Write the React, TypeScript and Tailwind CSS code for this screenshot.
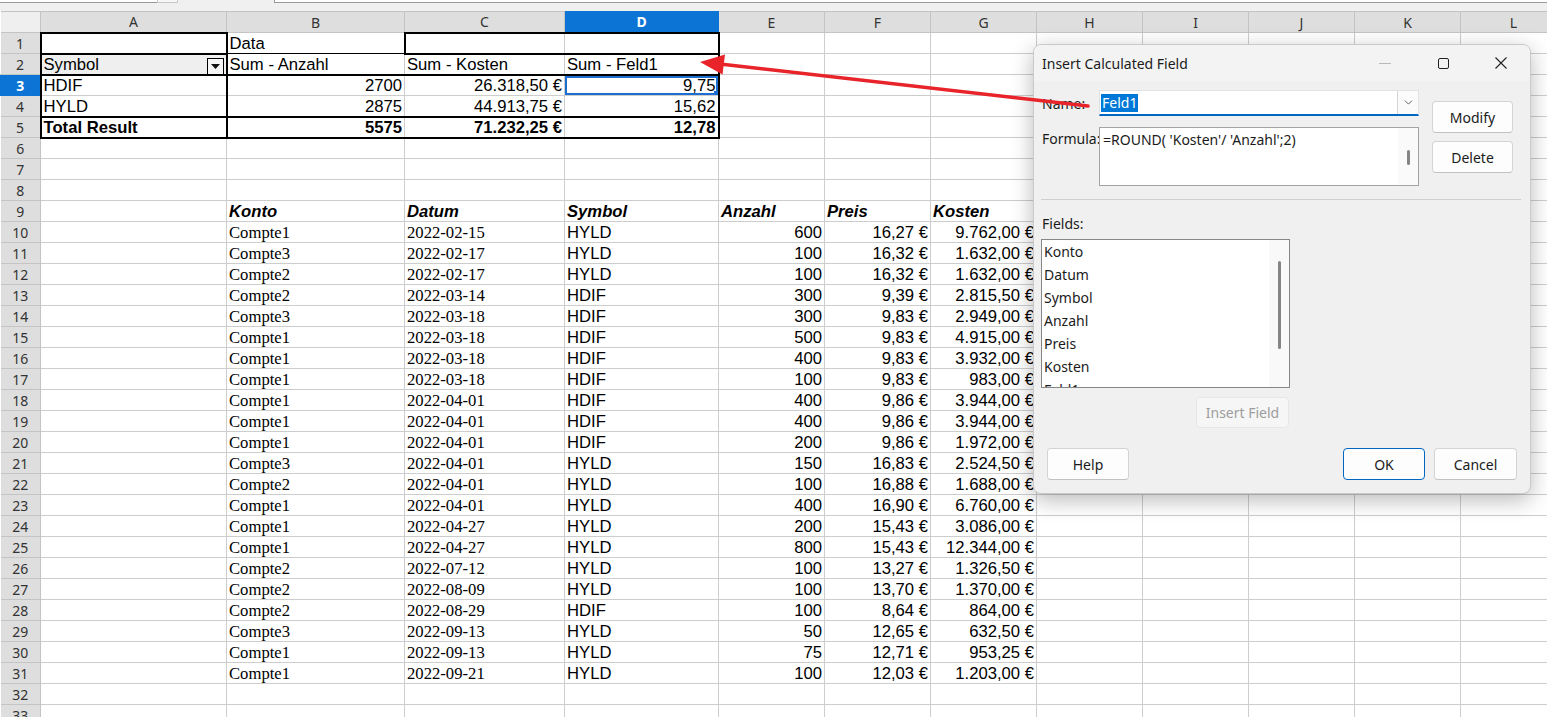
import { ChevronDown } from "lucide-react";

type Cell = { t?: string; c?: string; sel?: boolean; filter?: boolean };

const SERIF = "font-['Liberation_Serif',serif]";
const R = "text-right";
const BI = "font-bold italic";

const COLS: { k: string; w: string }[] = [
  { k: "A", w: "w-[186px]" },
  { k: "B", w: "w-[178px]" },
  { k: "C", w: "w-[160px]" },
  { k: "D", w: "w-[154px]" },
  { k: "E", w: "w-[106px]" },
  { k: "F", w: "w-[106px]" },
  { k: "G", w: "w-[106px]" },
  { k: "H", w: "w-[106px]" },
  { k: "I", w: "w-[106px]" },
  { k: "J", w: "w-[106px]" },
  { k: "K", w: "w-[106px]" },
  { k: "L", w: "w-[106px]" },
];

const DATA: string[][] = [
  ["Compte1", "2022-02-15", "HYLD", "600", "16,27 €", "9.762,00 €"],
  ["Compte3", "2022-02-17", "HYLD", "100", "16,32 €", "1.632,00 €"],
  ["Compte2", "2022-02-17", "HYLD", "100", "16,32 €", "1.632,00 €"],
  ["Compte2", "2022-03-14", "HDIF", "300", "9,39 €", "2.815,50 €"],
  ["Compte3", "2022-03-18", "HDIF", "300", "9,83 €", "2.949,00 €"],
  ["Compte1", "2022-03-18", "HDIF", "500", "9,83 €", "4.915,00 €"],
  ["Compte1", "2022-03-18", "HDIF", "400", "9,83 €", "3.932,00 €"],
  ["Compte1", "2022-03-18", "HDIF", "100", "9,83 €", "983,00 €"],
  ["Compte1", "2022-04-01", "HDIF", "400", "9,86 €", "3.944,00 €"],
  ["Compte1", "2022-04-01", "HDIF", "400", "9,86 €", "3.944,00 €"],
  ["Compte1", "2022-04-01", "HDIF", "200", "9,86 €", "1.972,00 €"],
  ["Compte3", "2022-04-01", "HYLD", "150", "16,83 €", "2.524,50 €"],
  ["Compte2", "2022-04-01", "HYLD", "100", "16,88 €", "1.688,00 €"],
  ["Compte1", "2022-04-01", "HYLD", "400", "16,90 €", "6.760,00 €"],
  ["Compte1", "2022-04-27", "HYLD", "200", "15,43 €", "3.086,00 €"],
  ["Compte1", "2022-04-27", "HYLD", "800", "15,43 €", "12.344,00 €"],
  ["Compte2", "2022-07-12", "HYLD", "100", "13,27 €", "1.326,50 €"],
  ["Compte2", "2022-08-09", "HYLD", "100", "13,70 €", "1.370,00 €"],
  ["Compte2", "2022-08-29", "HDIF", "100", "8,64 €", "864,00 €"],
  ["Compte3", "2022-09-13", "HYLD", "50", "12,65 €", "632,50 €"],
  ["Compte1", "2022-09-13", "HYLD", "75", "12,71 €", "953,25 €"],
  ["Compte1", "2022-09-21", "HYLD", "100", "12,03 €", "1.203,00 €"],
];

const empty = (n: number): Cell[] => Array.from({ length: n }, () => ({}));

function buildRows(): Cell[][] {
  const rows: Cell[][] = [];
  rows.push([
    { c: "border-2 border-black" },
    { t: "Data", c: "border-b-black" },
    { c: "border-t-2 border-l-2 border-b-2 border-t-black border-l-black border-b-black" },
    { c: "border-t-2 border-r-2 border-b-2 border-t-black border-r-black border-b-black" },
    ...empty(8),
  ]);
  rows.push([
    { t: "Symbol", filter: true, c: "bg-[#efefef] border-l-2 border-r-2 border-b-2 border-l-black border-r-black border-b-black" },
    { t: "Sum - Anzahl", c: "border-b-2 border-b-black" },
    { t: "Sum - Kosten", c: "border-b-2 border-b-black" },
    { t: "Sum - Feld1", c: "border-b-2 border-r-2 border-b-black border-r-black" },
    ...empty(8),
  ]);
  rows.push([
    { t: "HDIF", c: "border-l-2 border-r-2 border-l-black border-r-black" },
    { t: "2700", c: R },
    { t: "26.318,50 €", c: R },
    { t: "9,75", c: R + " border-r-2 border-r-black", sel: true },
    ...empty(8),
  ]);
  rows.push([
    { t: "HYLD", c: "border-l-2 border-r-2 border-l-black border-r-black" },
    { t: "2875", c: R },
    { t: "44.913,75 €", c: R },
    { t: "15,62", c: R + " border-r-2 border-r-black" },
    ...empty(8),
  ]);
  rows.push([
    { t: "Total Result", c: "font-bold border-2 border-black" },
    { t: "5575", c: "text-right font-bold border-t-2 border-b-2 border-t-black border-b-black" },
    { t: "71.232,25 €", c: "text-right font-bold border-t-2 border-b-2 border-t-black border-b-black" },
    { t: "12,78", c: "text-right font-bold border-t-2 border-b-2 border-r-2 border-t-black border-b-black border-r-black" },
    ...empty(8),
  ]);
  rows.push(empty(12));
  rows.push(empty(12));
  rows.push(empty(12));
  rows.push([
    {},
    { t: "Konto", c: BI },
    { t: "Datum", c: BI },
    { t: "Symbol", c: BI },
    { t: "Anzahl", c: BI },
    { t: "Preis", c: BI },
    { t: "Kosten", c: BI },
    ...empty(5),
  ]);
  DATA.forEach((d) => {
    rows.push([
      {},
      { t: d[0], c: SERIF },
      { t: d[1], c: SERIF },
      { t: d[2] },
      { t: d[3], c: R },
      { t: d[4], c: R },
      { t: d[5], c: R },
      ...empty(5),
    ]);
  });
  rows.push(empty(12));
  rows.push(empty(12));
  return rows;
}

function Sheet() {
  const rows = buildRows();
  return (
    <table className="table-fixed border-collapse w-[1566px] font-['Liberation_Sans',Arial,sans-serif] text-[16.67px] text-black">
      <colgroup>
        <col className="w-[40px]" />
        {COLS.map((c) => (
          <col key={c.k} className={c.w} />
        ))}
      </colgroup>
      <thead>
        <tr className="h-[21px]">
          <th className="p-0 h-[21px] bg-[#efefef] border border-[#c4c4c4] border-l-0"></th>
          {COLS.map((c) => (
            <th
              key={c.k}
              className={
                c.k === "D"
                  ? "p-0 h-[21px] leading-[19px] bg-[#0b74d4] text-white font-bold border border-[#0b74d4] font-['Noto_Sans',sans-serif] text-[14px]"
                  : "p-0 h-[21px] leading-[19px] bg-[#dedede] text-[#333] font-normal border border-[#c4c4c4] font-['Noto_Sans',sans-serif] text-[14px]"
              }
            >
              {c.k}
            </th>
          ))}
        </tr>
      </thead>
      <tbody>
        {rows.map((r, i) => (
          <tr key={i} className="h-[21px]">
            <td
              className={
                i === 2
                  ? "p-0 h-[21px] text-center bg-[#0b74d4] text-white font-bold border border-[#0b74d4] font-['Noto_Sans',sans-serif] text-[14px] leading-[19px]"
                  : "p-0 h-[21px] text-center bg-[#dedede] text-[#333] border border-[#c4c4c4] border-l-0 font-['Noto_Sans',sans-serif] text-[14px] leading-[19px]"
              }
            >
              {i + 1}
            </td>
            {r.map((cell, j) => (
              <td
                key={j}
                className={
                  "relative p-0 px-[2px] h-[21px] border border-[#cdcdcd] whitespace-nowrap overflow-hidden align-bottom leading-[19px] " +
                  (cell.c ?? "")
                }
              >
                {cell.t}
                {cell.sel && (
                  <>
                    <span className="absolute inset-0 border-2 border-[#1a6fd0]"></span>
                    <span className="absolute right-[-1px] bottom-[-1px] w-[5px] h-[5px] bg-[#1a6fd0]"></span>
                  </>
                )}
                {cell.filter && (
                  <span className="absolute right-[2px] top-[3px] w-[17px] h-[17px] border border-black bg-[#f6f6f6] flex items-center justify-center">
                    <svg width="9" height="5" viewBox="0 0 9 5">
                      <path d="M0 0h9L4.5 5z" fill="#111" />
                    </svg>
                  </span>
                )}
              </td>
            ))}
          </tr>
        ))}
      </tbody>
    </table>
  );
}

function DlgButton({ label, className }: { label: string; className: string }) {
  return (
    <button className={"flex items-center justify-center rounded-[4px] text-[14px] " + className}>
      {label}
    </button>
  );
}

function Dialog() {
  const fields = ["Konto", "Datum", "Symbol", "Anzahl", "Preis", "Kosten", "Feld1"];
  return (
    <div className="absolute left-[1033px] top-[44px] z-10 w-[498px] h-[450px] rounded-[8px] border border-[#c9c9c9] bg-[#f0f0f0] shadow-[0_6px_22px_rgba(0,0,0,0.28)] font-['Noto_Sans',sans-serif] text-[14px] text-[#1b1b1b] overflow-hidden">
      {/* title bar */}
      <div className="flex h-[36px] items-center bg-[#f3f3f3]">
        <div className="flex-1 pl-[8px]">Insert Calculated Field</div>
        <div className="flex h-full w-[58px] items-center justify-center">
          <div className="h-px w-[12px] bg-[#b8b8b8]"></div>
        </div>
        <div className="flex h-full w-[58px] items-center justify-center">
          <div className="h-[11px] w-[11px] rounded-[2px] border border-[#222]"></div>
        </div>
        <div className="flex h-full w-[58px] items-center justify-center">
          <svg width="12" height="12" viewBox="0 0 12 12">
            <path d="M0.5 0.5l11 11M11.5 0.5l-11 11" stroke="#222" strokeWidth="1.1" />
          </svg>
        </div>
      </div>

      {/* name / formula + buttons */}
      <div className="flex pl-[8px] pt-[9px]">
        <div className="flex flex-col gap-[11px]">
          <div className="flex h-[26px] items-center">
            <div className="w-[57px]">Name:</div>
            <div className="flex h-[26px] w-[320px] items-stretch border border-b-2 border-[#e2e2e2] border-b-[#0067c0] bg-white">
              <div className="flex flex-1 items-center pl-[1px]">
                <span className="bg-[#0078d7] px-[1px] leading-[18px] text-white">Feld1</span>
              </div>
              <div className="flex w-[21px] items-center justify-center border-l border-[#d6d6d6] bg-[#fbfbfb]">
                <ChevronDown size={13} strokeWidth={1.4} color="#333" />
              </div>
            </div>
          </div>
          <div className="flex">
            <div className="w-[57px] pt-[1px]">Formula:</div>
            <div className="flex h-[59px] w-[320px] border border-[#a3a3a3] bg-white">
              <div className="flex-1 pl-[3px] pt-[1px]">=ROUND( 'Kosten'/ 'Anzahl';2)</div>
              <div className="flex w-[20px] justify-center bg-[#fafafa] pt-[22px]">
                <div className="h-[15px] w-[3px] rounded-full bg-[#858585]"></div>
              </div>
            </div>
          </div>
        </div>
        <div className="ml-[13px] mt-[11px] flex flex-col gap-[8px]">
          <DlgButton label="Modify" className="h-[32px] w-[81px] border border-[#d4d4d4] border-b-[#c2c2c2] bg-[#fdfdfd]" />
          <DlgButton label="Delete" className="h-[32px] w-[81px] border border-[#d4d4d4] border-b-[#c2c2c2] bg-[#fdfdfd]" />
        </div>
      </div>

      <div className="ml-[7px] mr-[9px] mt-[13px] h-px bg-[#cfcfcf]"></div>

      {/* fields */}
      <div className="ml-[8px] mt-[14px] h-[20px] leading-[20px]">Fields:</div>
      <div className="ml-[7px] mt-[5px] flex h-[149px] w-[249px] border border-[#868686] bg-white">
        <div className="flex-1 overflow-hidden pl-[2px]">
          {fields.map((f) => (
            <div key={f} className="flex h-[23px] items-center">
              {f}
            </div>
          ))}
        </div>
        <div className="flex w-[20px] justify-center bg-[#f9f9f9] pt-[21px]">
          <div className="h-[88px] w-[3px] rounded-full bg-[#858585]"></div>
        </div>
      </div>
      <div className="ml-[7px] mt-[9px] flex w-[249px] justify-end pr-[1px]">
        <DlgButton label="Insert Field" className="h-[31px] w-[93px] border border-[#e6e6e6] bg-[#f6f6f6] text-[#9d9d9d]" />
      </div>

      {/* bottom buttons */}
      <div className="mt-[20px] flex px-[13px]">
        <DlgButton label="Help" className="h-[32px] w-[82px] border border-[#d4d4d4] border-b-[#c2c2c2] bg-[#fdfdfd]" />
        <div className="flex-1"></div>
        <DlgButton label="OK" className="h-[32px] w-[82px] border border-[#0067c0] bg-[#fdfdfd]" />
        <DlgButton label="Cancel" className="ml-[9px] h-[32px] w-[83px] border border-[#d4d4d4] border-b-[#c2c2c2] bg-[#fdfdfd]" />
      </div>
    </div>
  );
}

function Arrow() {
  return (
    <svg className="pointer-events-none absolute left-0 top-0 z-20" width="1547" height="717">
      <line x1="1088" y1="106" x2="720" y2="64" stroke="#e8242a" strokeWidth="3.5" strokeLinecap="round" />
      <polygon points="700,62 725,54.5 722.5,74.5" fill="#e8242a" />
    </svg>
  );
}

export default function App() {
  return (
    <div className="relative h-[717px] w-[1547px] overflow-hidden bg-white">
      <div className="h-[11px] bg-[#f0f0f0]">
        <div className="flex h-[3px]">
          <div className="w-[157px] border-b border-[#9a9a9a] bg-white"></div>
          <div className="w-[21px] border-x border-b border-[#c8c8c8] bg-[#f7f7f7]"></div>
          <div className="w-[96px]"></div>
          <div className="flex-1 border-b border-l border-[#9a9a9a] bg-white"></div>
        </div>
      </div>
      <Sheet />
      <Dialog />
      <Arrow />
    </div>
  );
}
